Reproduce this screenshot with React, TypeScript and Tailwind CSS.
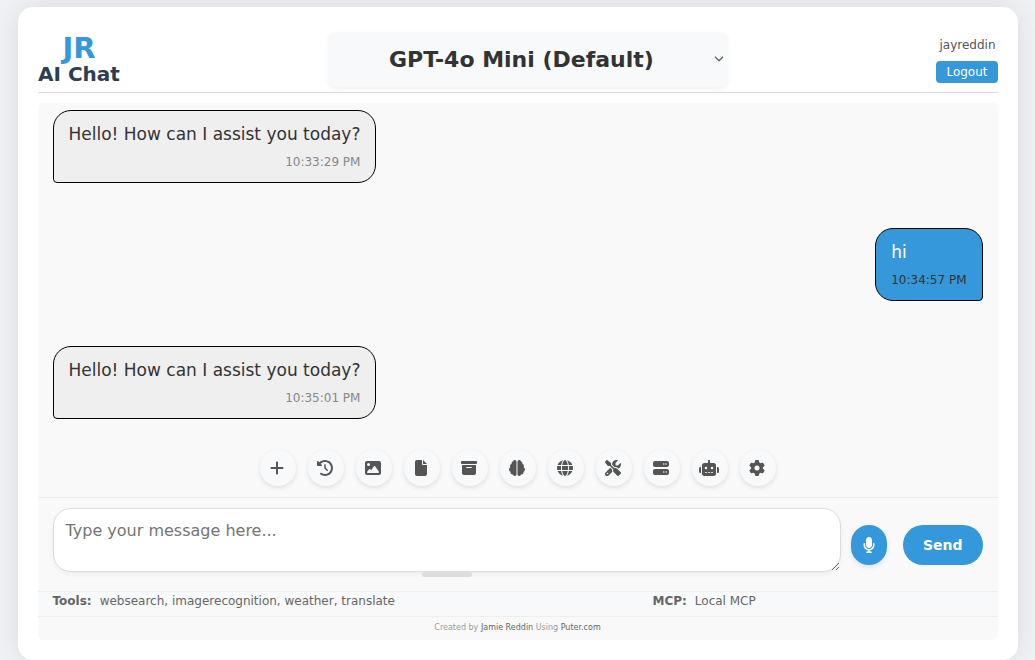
import { useState } from "react";
import type { IconType } from "react-icons";
import {
  FaPlus,
  FaClockRotateLeft,
  FaImage,
  FaFile,
  FaBoxArchive,
  FaBrain,
  FaGlobe,
  FaScrewdriverWrench,
  FaServer,
  FaRobot,
  FaGear,
  FaMicrophone,
} from "react-icons/fa6";

type Message = { from: "user" | "assistant"; text: string; time: string };

const messages: Message[] = [
  { from: "assistant", text: "Hello! How can I assist you today?", time: "10:33:29 PM" },
  { from: "user", text: "hi", time: "10:34:57 PM" },
  { from: "assistant", text: "Hello! How can I assist you today?", time: "10:35:01 PM" },
];

const tools: { label: string; icon: IconType }[] = [
  { label: "New chat", icon: FaPlus },
  { label: "History", icon: FaClockRotateLeft },
  { label: "Image", icon: FaImage },
  { label: "File", icon: FaFile },
  { label: "Archive", icon: FaBoxArchive },
  { label: "Memory", icon: FaBrain },
  { label: "Web", icon: FaGlobe },
  { label: "Tools", icon: FaScrewdriverWrench },
  { label: "Servers", icon: FaServer },
  { label: "Agents", icon: FaRobot },
  { label: "Settings", icon: FaGear },
];

function Header() {
  return (
    <header className="flex items-center justify-between border-b border-[#dddddd] pb-[5px]">
      <h1 className="flex w-[83px] flex-col items-center pt-px font-bold whitespace-nowrap">
        <span className="text-[29px] leading-7 text-[#3498db]">JR</span>
        <span className="text-xl leading-6 text-[#2c3e50]">AI Chat</span>
      </h1>
      <div className="relative">
        <select
          aria-label="Model"
          className="block h-[55px] w-[400px] appearance-none rounded-lg bg-[#f8f9fa] pr-[14px] text-center text-[22px] font-bold text-[#333333] shadow-[0_2px_5px_rgba(0,0,0,0.05)]"
        >
          <option>GPT-4o Mini (Default)</option>
        </select>
        <svg
          viewBox="0 0 10 6"
          className="pointer-events-none absolute top-6 right-1 h-[6px] w-[10px] fill-none stroke-[#666666]"
          strokeWidth="1.4"
          aria-hidden="true"
        >
          <path d="M1 0.8 L5 4.8 L9 0.8" />
        </svg>
      </div>
      <div className="flex flex-col items-end gap-2">
        <span className="pr-0.5 text-xs leading-4 text-[#555555]">jayreddin</span>
        <button className="rounded bg-[#3498db] px-2.5 py-[3px] text-xs leading-4 text-white">
          Logout
        </button>
      </div>
    </header>
  );
}

function Bubble({ message }: { message: Message }) {
  const mine = message.from === "user";
  return (
    <li
      className={
        mine
          ? "flex flex-col gap-2 self-end rounded-[18px] rounded-br-[4px] border border-black bg-[#3498db] px-[15px] pt-[11px] pb-3 text-white"
          : "flex flex-col gap-2 self-start rounded-[18px] rounded-bl-[4px] border border-black bg-[#efefef] px-[15px] pt-[11px] pb-3 text-[#333333]"
      }
    >
      <p className="text-[17px] leading-6">{message.text}</p>
      <time
        className={
          mine
            ? "text-right text-xs leading-4 text-[#333333]"
            : "text-right text-xs leading-4 text-[#888888]"
        }
      >
        {message.time}
      </time>
    </li>
  );
}

function Composer() {
  const [draft, setDraft] = useState("");
  return (
    <form
      className="flex items-end border-t border-[#eeeeee] px-[15px] pt-2.5 pb-[14px]"
      onSubmit={(e) => e.preventDefault()}
    >
      <div className="flex flex-1 flex-col items-center">
        <textarea
          aria-label="Message"
          placeholder="Type your message here..."
          value={draft}
          onChange={(e) => setDraft(e.target.value)}
          className="h-16 w-full resize rounded-[18px] border border-[#dddddd] bg-white px-3 py-2.5 text-base leading-6 text-[#333333] shadow-[0_2px_5px_rgba(0,0,0,0.05)] placeholder:text-[#757575]"
        />
        <span className="h-[5px] w-[50px] rounded-[3px] bg-[#dddddd]" />
      </div>
      <div className="mb-3 ml-2.5 flex gap-4">
        <button
          type="button"
          aria-label="Voice input"
          className="flex h-10 w-9 items-center justify-center rounded-[18px] bg-[#3498db] text-white shadow-[0_2px_5px_rgba(0,0,0,0.1)]"
        >
          <FaMicrophone className="size-4" />
        </button>
        <button className="h-10 rounded-[20px] bg-[#3498db] px-5 text-sm font-bold text-white">
          Send
        </button>
      </div>
    </form>
  );
}

export default function App() {
  return (
    <div className="flex min-h-screen justify-center bg-[#f0f2f5] px-[17px] pt-[7px] font-['DejaVu_Sans',sans-serif]">
      <main className="flex w-full max-w-[1000px] flex-col rounded-[15px] bg-white px-5 pt-[25px] pb-5 shadow-[0_0_30px_rgba(0,0,0,0.1)]">
        <Header />
        <section className="mt-2.5 flex flex-1 flex-col rounded-[5px] bg-[#f9f9f9]">
          <ul className="flex flex-1 flex-col gap-[45px] px-[15px] pt-[7px]">
            {messages.map((m) => (
              <Bubble key={m.time} message={m} />
            ))}
          </ul>
          <div className="flex justify-center gap-3 pb-[11px]">
            {tools.map(({ label, icon: Icon }) => (
              <button
                key={label}
                aria-label={label}
                className="flex size-9 items-center justify-center rounded-full bg-[#f8f9fa] pr-px text-[#555555] shadow-[0_2px_5px_rgba(0,0,0,0.1)]"
              >
                <Icon className="h-4 w-5" />
              </button>
            ))}
          </div>
          <Composer />
          <div className="grid grid-cols-[600px_1fr] border-y border-[#eeeeee] bg-[#f8f9fa] px-[15px] pt-px pb-[7px] text-xs leading-4 text-[#666666]">
            <p className="flex gap-2">
              <strong>Tools:</strong>
              <span>websearch, imagerecognition, weather, translate</span>
            </p>
            <p className="flex gap-2">
              <strong>MCP:</strong>
              <span>Local MCP</span>
            </p>
          </div>
          <footer className="pt-[5px] pb-1.5 text-center text-[8px] leading-3 text-[#999999]">
            Created by{" "}
            <a href="#jamie" className="text-[#666666]">
              Jamie Reddin
            </a>{" "}
            Using{" "}
            <a href="#puter" className="text-[#666666]">
              Puter.com
            </a>
          </footer>
        </section>
      </main>
    </div>
  );
}
